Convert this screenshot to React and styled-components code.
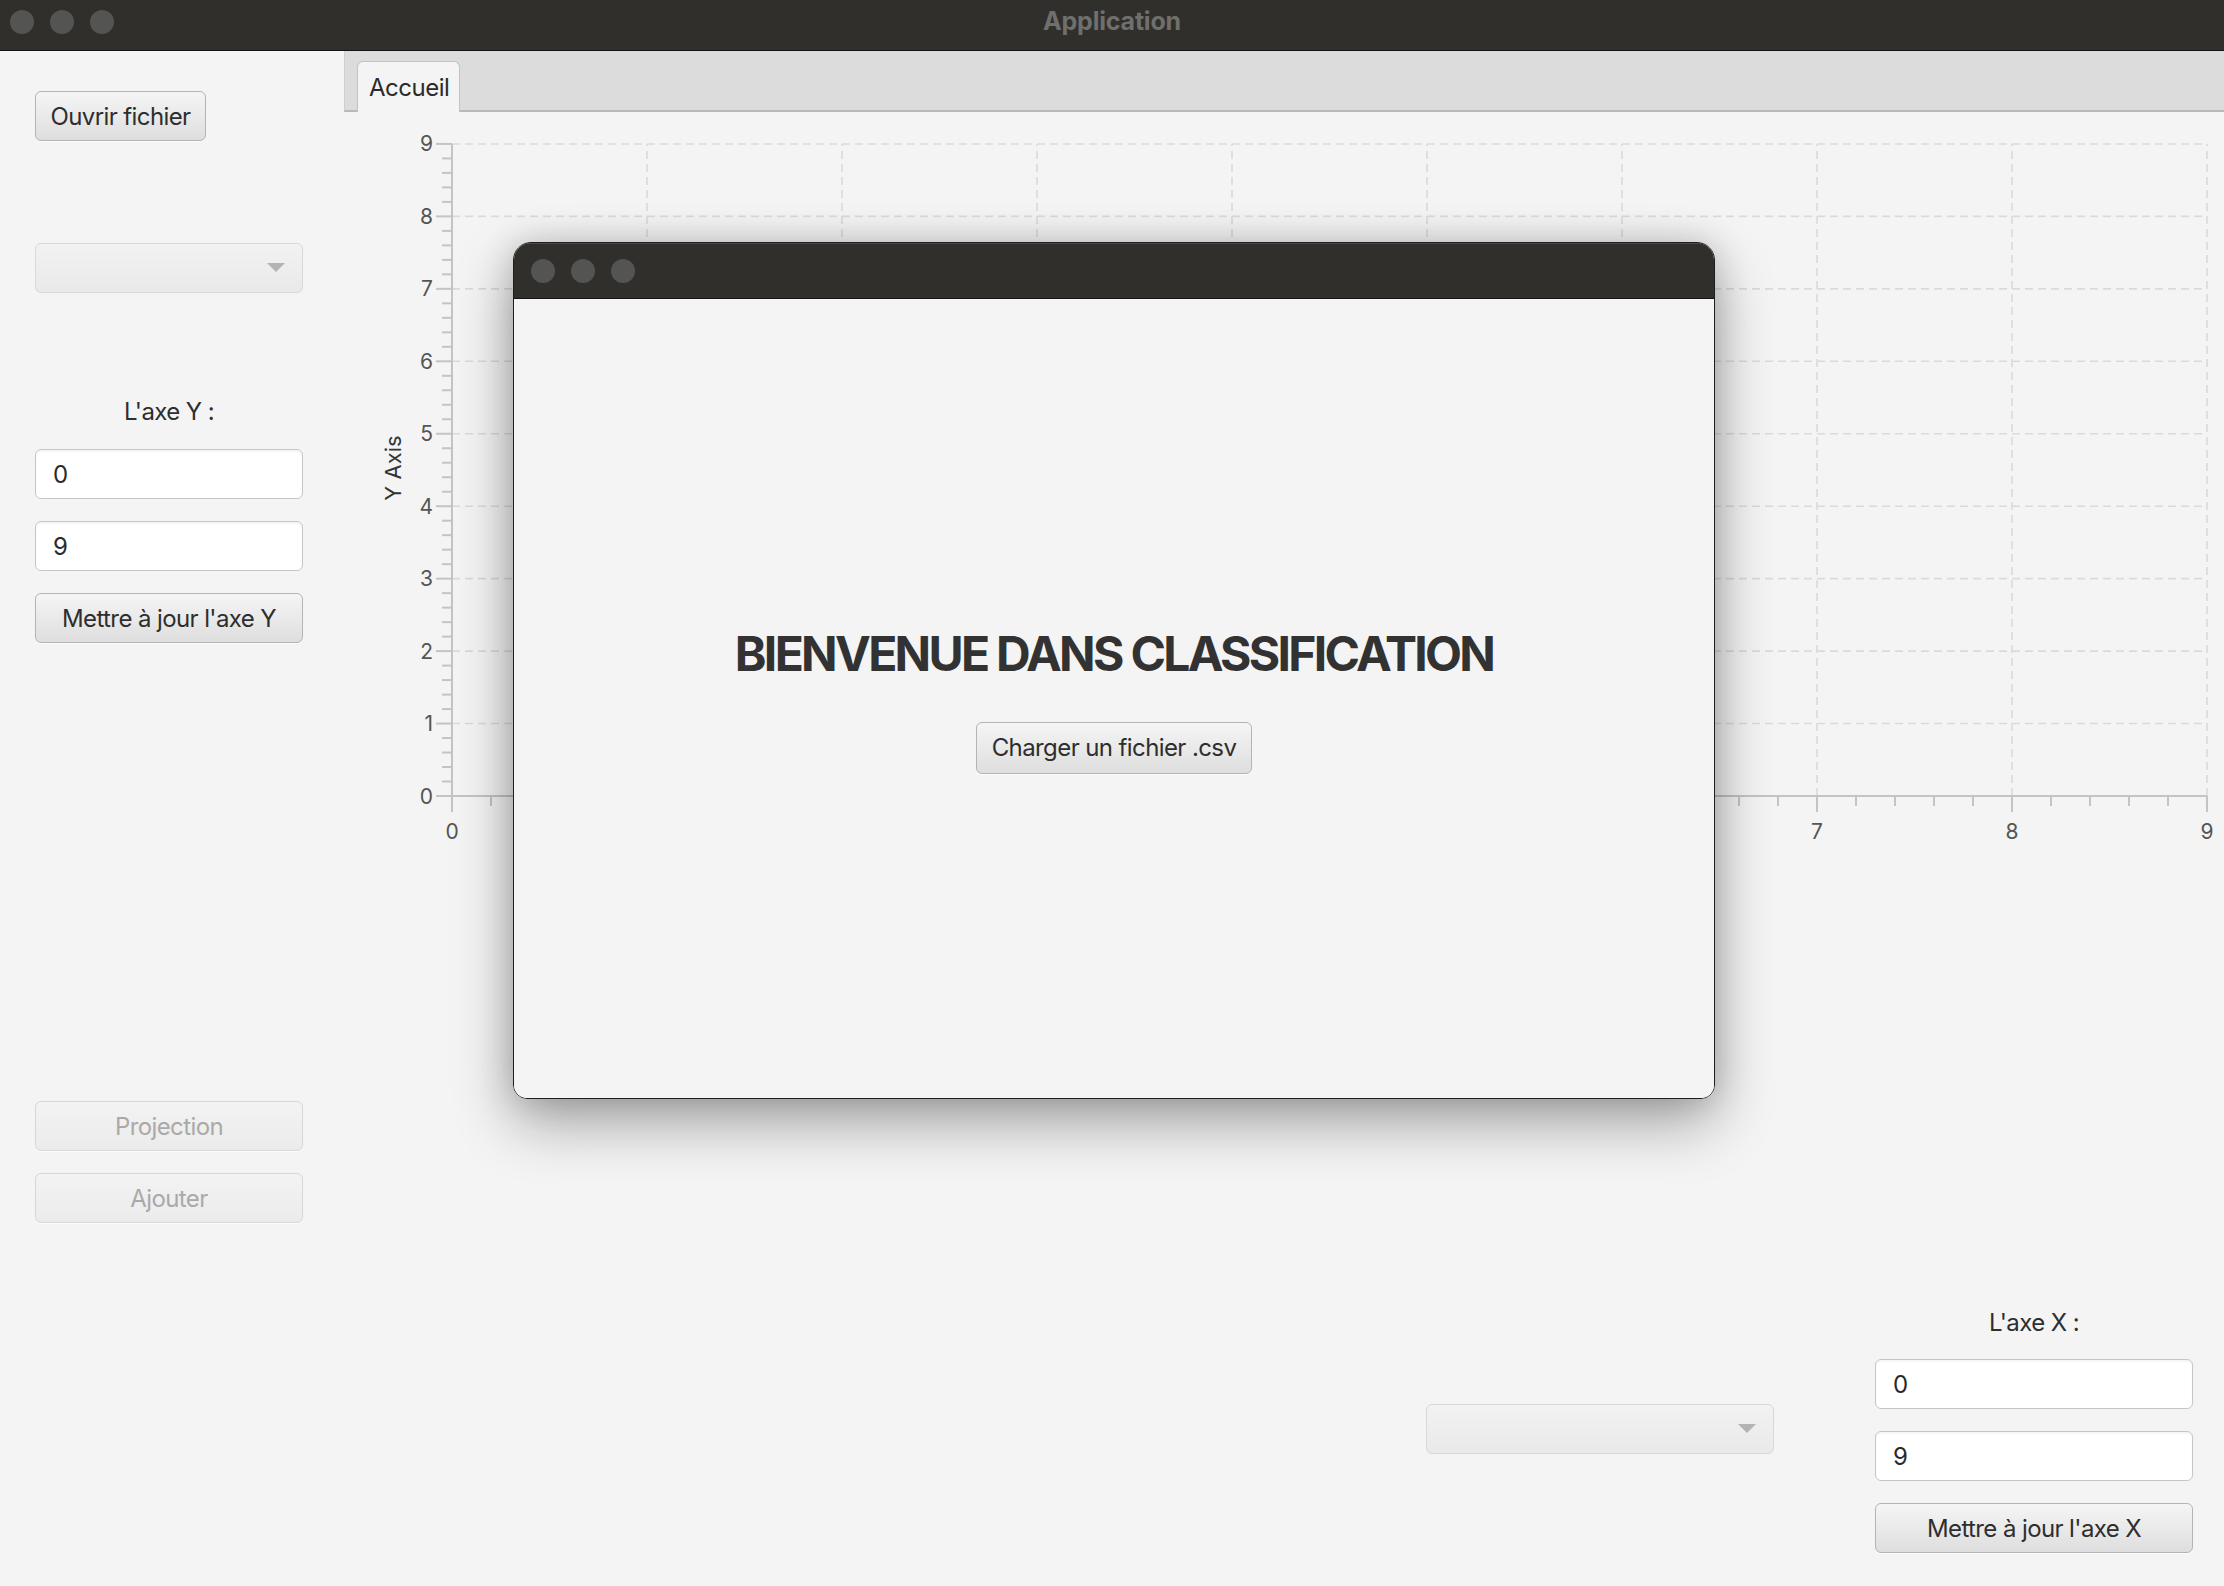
import React from "react";
import styled, { createGlobalStyle } from "styled-components";

const GlobalStyle = createGlobalStyle`
    html, body {
        margin: 0;
        padding: 0;
    }
    body {
        font-family: Inter, "Noto Sans", sans-serif;
        background-color: #f4f4f4;
        color: #333333;
    }
    * {
        box-sizing: border-box;
    }
`;

// chart geometry (svg coordinates)
const X0 = 108;
const Y0 = 684;
const UX = 195;
const UY = 72.45;
const STEPS = [0, 1, 2, 3, 4, 5, 6, 7, 8, 9];

function Chart() {
    const minorX = [];
    const minorY = [];
    for (let i = 1; i < 45; i++) {
        if (i % 5 !== 0) {
            minorX.push(X0 + (i * UX) / 5);
            minorY.push(Y0 - (i * UY) / 5);
        }
    }
    const right = X0 + 9 * UX;
    const top = Y0 - 9 * UY;

    return (
        <ChartSvg width="1880" height="760" viewBox="0 0 1880 760">
            {STEPS.slice(1).map((v) => (
                <g key={"g" + v} stroke="#dadada" strokeWidth="1.6" strokeDasharray="8 5">
                    <line x1={X0} x2={right} y1={Y0 - v * UY} y2={Y0 - v * UY} />
                    <line x1={X0 + v * UX} x2={X0 + v * UX} y1={Y0} y2={top} />
                </g>
            ))}
            <g stroke="#c4c4c4" strokeWidth="2">
                <line x1={X0} x2={right} y1={Y0} y2={Y0} />
                <line x1={X0} x2={X0} y1={Y0} y2={top} />
                {minorX.map((x) => (
                    <line key={"mx" + x} x1={x} x2={x} y1={Y0} y2={Y0 + 10} />
                ))}
                {minorY.map((y) => (
                    <line key={"my" + y} x1={X0 - 10} x2={X0} y1={y} y2={y} />
                ))}
                {STEPS.map((v) => (
                    <line key={"Mx" + v} x1={X0 + v * UX} x2={X0 + v * UX} y1={Y0} y2={Y0 + 16} />
                ))}
                {STEPS.map((v) => (
                    <line key={"My" + v} x1={X0 - 16} x2={X0} y1={Y0 - v * UY} y2={Y0 - v * UY} />
                ))}
            </g>
            <g fill="#555555" fontSize="21" fontFamily="Inter, sans-serif">
                {STEPS.map((v) => (
                    <text key={"ly" + v} x={X0 - 19} y={Y0 - v * UY} textAnchor="end" dominantBaseline="central">
                        {v}
                    </text>
                ))}
                {STEPS.map((v) => (
                    <text key={"lx" + v} x={X0 + v * UX} y={Y0 + 35} textAnchor="middle" dominantBaseline="central">
                        {v}
                    </text>
                ))}
            </g>
            <text
                x="49"
                y="356"
                fill="#333333"
                fontSize="22"
                fontFamily="Inter, sans-serif"
                textAnchor="middle"
                dominantBaseline="central"
                transform="rotate(-90 49 356)"
            >
                Y Axis
            </text>
        </ChartSvg>
    );
}

function Combo({ width }) {
    return (
        <ComboBox $width={width}>
            <svg width="18" height="10" viewBox="0 0 18 10">
                <path d="M0 0 L18 0 L9 9 Z" fill="#b3b3b3" />
            </svg>
        </ComboBox>
    );
}

export default function App() {
    return (
        <>
            <GlobalStyle />
            <Window>
                <TitleBar>
                    <Dots>
                        <Dot />
                        <Dot />
                        <Dot />
                    </Dots>
                    <Title>Application</Title>
                </TitleBar>
                <Body>
                    <LeftPanel>
                        <Button $width={171}>Ouvrir fichier</Button>
                        <Combo width={268} />
                        <AxisLabel style={{ marginTop: "104px" }}>L'axe Y :</AxisLabel>
                        <FieldStack>
                            <Field>0</Field>
                            <Field>9</Field>
                            <Button $width={268}>Mettre à jour l'axe Y</Button>
                        </FieldStack>
                        <FieldStack style={{ marginTop: "458px" }}>
                            <Button $width={268} $muted>
                                Projection
                            </Button>
                            <Button $width={268} $muted>
                                Ajouter
                            </Button>
                        </FieldStack>
                    </LeftPanel>
                    <MainArea>
                        <TabHeader>
                            <Tab>Accueil</Tab>
                        </TabHeader>
                        <TabContent>
                            <Chart />
                            <BottomRow>
                                <BottomCombo>
                                    <Combo width={348} />
                                </BottomCombo>
                                <XColumn>
                                    <AxisLabel>L'axe X :</AxisLabel>
                                    <FieldStack>
                                        <Field>0</Field>
                                        <Field>9</Field>
                                        <Button $width={318}>Mettre à jour l'axe X</Button>
                                    </FieldStack>
                                </XColumn>
                            </BottomRow>
                        </TabContent>
                    </MainArea>
                </Body>

                <Modal>
                    <ModalBar>
                        <Dots>
                            <Dot />
                            <Dot />
                            <Dot />
                        </Dots>
                    </ModalBar>
                    <ModalBody>
                        <Welcome>BIENVENUE DANS CLASSIFICATION</Welcome>
                        <Button $width={276} $tall>
                            Charger un fichier .csv
                        </Button>
                    </ModalBody>
                </Modal>
            </Window>
        </>
    );
}

const Window = styled.div`
    position: relative;
    width: 2224px;
    height: 1586px;
    display: flex;
    flex-direction: column;
    overflow: hidden;
    background-color: #f4f4f4;
`;

const TitleBar = styled.div`
    position: relative;
    height: 51px;
    flex-shrink: 0;
    display: flex;
    align-items: center;
    justify-content: center;
    background-color: #302f2c;
    border-bottom: 1px solid #121212;
`;

const Dots = styled.div`
    position: absolute;
    left: 10px;
    top: 10px;
    display: flex;
    gap: 16px;
`;

const Dot = styled.span`
    width: 24px;
    height: 24px;
    border-radius: 50%;
    background-color: #545452;
`;

const Title = styled.div`
    color: #6f6f6d;
    font-size: 25px;
    font-weight: 700;
    margin-top: -8px;
    letter-spacing: -0.2px;
`;

const Body = styled.div`
    flex: 1;
    display: flex;
    flex-direction: row;
`;

const LeftPanel = styled.div`
    width: 344px;
    flex-shrink: 0;
    padding: 40px 0 0 35px;
    display: flex;
    flex-direction: column;
    align-items: flex-start;
    & > ${"div"}:nth-child(2) {
        margin-top: 102px;
    }
`;

const Button = styled.div`
    width: ${(props) => props.$width}px;
    height: ${(props) => (props.$tall ? 52 : 50)}px;
    flex-shrink: 0;
    display: flex;
    align-items: center;
    justify-content: center;
    border-radius: 6px;
    font-size: 24px;
    letter-spacing: -0.6px;
    color: ${(props) => (props.$muted ? "#a9a9a9" : "#2e2e2e")};
    border: 1.5px solid ${(props) => (props.$muted ? "#d7d7d7" : "#b4b4b4")};
    background: ${(props) =>
        props.$muted
            ? "linear-gradient(#f3f3f3, #ebebeb)"
            : "linear-gradient(#f5f5f5, #dedede)"};
    box-shadow: 0 1px 0 rgba(255, 255, 255, 0.7);
`;

const ComboBox = styled.div`
    width: ${(props) => props.$width}px;
    height: 50px;
    flex-shrink: 0;
    display: flex;
    align-items: center;
    justify-content: flex-end;
    padding-right: 17px;
    border-radius: 6px;
    border: 1.5px solid #d8d8d8;
    background: linear-gradient(#f2f2f2, #e9e9e9);
`;

const AxisLabel = styled.div`
    width: 268px;
    height: 30px;
    line-height: 30px;
    text-align: center;
    font-size: 24px;
    letter-spacing: -0.6px;
    color: #2e2e2e;
    margin-bottom: 22px;
`;

const FieldStack = styled.div`
    display: flex;
    flex-direction: column;
    gap: 22px;
`;

const Field = styled.div`
    width: 100%;
    min-width: 268px;
    height: 50px;
    display: flex;
    align-items: center;
    padding-left: 17px;
    background-color: #ffffff;
    border: 1.5px solid #c6c6c6;
    border-radius: 6px;
    box-shadow: inset 0 2px 2px rgba(0, 0, 0, 0.04);
    font-size: 24px;
    color: #2a2a2a;
`;

const MainArea = styled.div`
    flex: 1;
    display: flex;
    flex-direction: column;
`;

const TabHeader = styled.div`
    height: 61px;
    flex-shrink: 0;
    display: flex;
    align-items: flex-end;
    padding-left: 12px;
    background-color: #dcdcdc;
    border-bottom: 2px solid #b9b9b9;
    border-left: 1px solid #cfcfcf;
`;

const Tab = styled.div`
    height: 51px;
    margin-bottom: -2px;
    padding: 0 10px 0 11px;
    display: flex;
    align-items: center;
    background-color: #f4f4f4;
    border: 1.5px solid #c3c3c3;
    border-bottom: none;
    border-radius: 6px 6px 0 0;
    font-size: 24px;
    letter-spacing: -0.5px;
    color: #2b2b2b;
`;

const TabContent = styled.div`
    flex: 1;
    display: flex;
    flex-direction: column;
    justify-content: space-between;
`;

const ChartSvg = styled.svg`
    display: block;
    flex-shrink: 0;
`;

const BottomRow = styled.div`
    display: flex;
    flex-direction: row;
    justify-content: flex-end;
    align-items: flex-end;
    gap: 101px;
    padding: 0 31px 33px 0;
`;

const BottomCombo = styled.div`
    margin-bottom: 99px;
`;

const XColumn = styled.div`
    width: 318px;
    display: flex;
    flex-direction: column;
    ${AxisLabel} {
        width: 318px;
        margin-bottom: 21px;
    }
    ${Field} {
        min-width: 318px;
    }
`;

const Modal = styled.div`
    position: absolute;
    left: 513px;
    top: 242px;
    width: 1202px;
    height: 857px;
    display: flex;
    flex-direction: column;
    border-radius: 18px 18px 14px 14px;
    border: 1.5px solid #1e1e1e;
    overflow: hidden;
    box-shadow: 0 24px 60px rgba(0, 0, 0, 0.33), 0 0 34px rgba(0, 0, 0, 0.16);
`;

const ModalBar = styled.div`
    position: relative;
    height: 56px;
    flex-shrink: 0;
    background-color: #302f2c;
    border-top: 1px solid #4a4a48;
    border-bottom: 1.5px solid #151515;
    ${Dots} {
        left: 17px;
        top: 15px;
    }
`;

const ModalBody = styled.div`
    flex: 1;
    display: flex;
    flex-direction: column;
    align-items: center;
    justify-content: center;
    gap: 44px;
    padding-top: 6px;
    background-color: #f4f4f4;
`;

const Welcome = styled.h1`
    margin: 0;
    font-size: 48px;
    font-weight: 700;
    letter-spacing: -2.7px;
    color: #323232;
    line-height: 1;
`;
